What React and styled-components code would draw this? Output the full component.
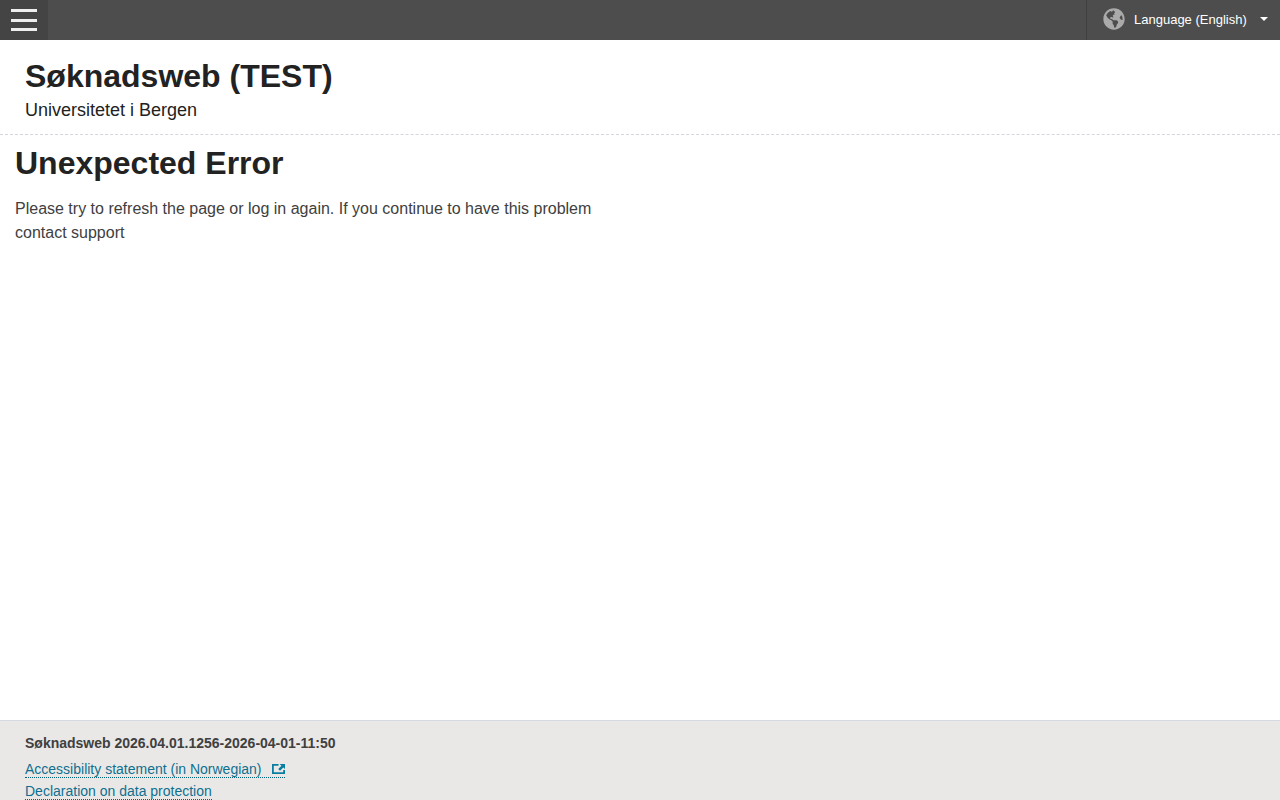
import React from "react";
import styled, { createGlobalStyle } from "styled-components";
import { FaGlobeAmericas } from "react-icons/fa";

const GlobalStyle = createGlobalStyle`
  html, body {
    margin: 0;
    padding: 0;
    height: 100%;
    overflow: hidden;
    background: #fff;
    font-family: "Liberation Sans", Arial, sans-serif;
  }
`;

const Page = styled.div`
  height: 800px;
  display: flex;
  flex-direction: column;
  overflow: hidden;
`;

const TopBar = styled.div`
  height: 40px;
  flex: none;
  display: flex;
  justify-content: space-between;
  background: #4d4d4d;
`;

const MenuButton = styled.button`
  width: 48px;
  height: 40px;
  padding: 9px 11px;
  border: 0;
  background: #444;
  display: flex;
  flex-direction: column;
  justify-content: space-between;
`;

const MenuLine = styled.span`
  display: block;
  width: 26px;
  height: 3px;
  background: #eee;
`;

const LanguageButton = styled.button`
  width: 194px;
  height: 40px;
  padding: 0 0 2px 16px;
  border: 0;
  border-left: 1px solid #404040;
  background: transparent;
  display: flex;
  align-items: center;
  color: #fff;
  font: 13px "Liberation Sans", Arial, sans-serif;
`;

const Globe = styled(FaGlobeAmericas)`
  width: 22px;
  height: 22px;
  color: #aaa;
  margin-right: 9px;
`;

const Caret = styled.span`
  width: 0;
  height: 0;
  margin-left: 13px;
  border-left: 4px solid transparent;
  border-right: 4px solid transparent;
  border-top: 4px solid #fff;
`;

const SiteHeader = styled.header`
  height: 95px;
  flex: none;
  padding: 0 25px;
  box-sizing: border-box;
  border-bottom: 1px dashed #d5d5dc;
`;

const SiteTitle = styled.div`
  padding-top: 17px;
  font-size: 32px;
  line-height: 38px;
  font-weight: 700;
  color: #222;
`;

const SiteSubtitle = styled.div`
  margin-top: 5px;
  font-size: 18px;
  line-height: 21px;
  color: #222;
`;

const Main = styled.main`
  flex: 1;
  padding: 0 15px;
`;

const ErrorTitle = styled.h1`
  margin: 9px 0 0;
  font-size: 32px;
  line-height: 38px;
  font-weight: 700;
  color: #222;
`;

const ErrorText = styled.p`
  margin: 15px 0 0;
  width: 600px;
  font-size: 16px;
  line-height: 24px;
  color: #404040;
`;

const Footer = styled.footer`
  height: 80px;
  flex: none;
  box-sizing: border-box;
  padding: 14px 25px 0;
  border-top: 1px solid #d5d9e2;
  background: #e9e8e7;
  font-size: 14px;
`;

const Version = styled.div`
  line-height: 16px;
  font-weight: 700;
  color: #404040;
`;

const FooterLinks = styled.div`
  margin-top: 9px;
  display: flex;
  flex-direction: column;
  align-items: flex-start;
  gap: 4px;
`;

const FooterLink = styled.a`
  display: inline-flex;
  align-items: flex-start;
  height: 16px;
  padding-top: 1px;
  line-height: 17px;
  color: #0f6f8f;
  text-decoration: none;
  border-bottom: 1px dotted #006080;
`;

const ExternalIcon = styled.svg`
  align-self: center;
  width: 13px;
  height: 10px;
  margin-left: 10px;
  color: #0a7ea0;
`;

export default function App() {
  return (
    <Page>
      <GlobalStyle />
      <TopBar>
        <MenuButton aria-label="Menu">
          <MenuLine />
          <MenuLine />
          <MenuLine />
        </MenuButton>
        <LanguageButton>
          <Globe />
          Language (English)
          <Caret />
        </LanguageButton>
      </TopBar>
      <SiteHeader>
        <SiteTitle>Søknadsweb (TEST)</SiteTitle>
        <SiteSubtitle>Universitetet i Bergen</SiteSubtitle>
      </SiteHeader>
      <Main>
        <ErrorTitle>Unexpected Error</ErrorTitle>
        <ErrorText>
          Please try to refresh the page or log in again. If you continue to have this problem contact support
        </ErrorText>
      </Main>
      <Footer>
        <Version>Søknadsweb 2026.04.01.1256-2026-04-01-11:50</Version>
        <FooterLinks>
          <FooterLink href="#">
            Accessibility statement (in Norwegian)
            <ExternalIcon viewBox="0 0 13 10">
              <path d="M0 0h6.5v1.8H1.8v6.4h9.4V6H13v4H0z" fill="currentColor" />
              <path d="M7.5 0H13v5l-1.7-1.5L8 6.8 6.2 5 9.5 1.7z" fill="currentColor" />
            </ExternalIcon>
          </FooterLink>
          <FooterLink href="#">Declaration on data protection</FooterLink>
        </FooterLinks>
      </Footer>
    </Page>
  );
}
